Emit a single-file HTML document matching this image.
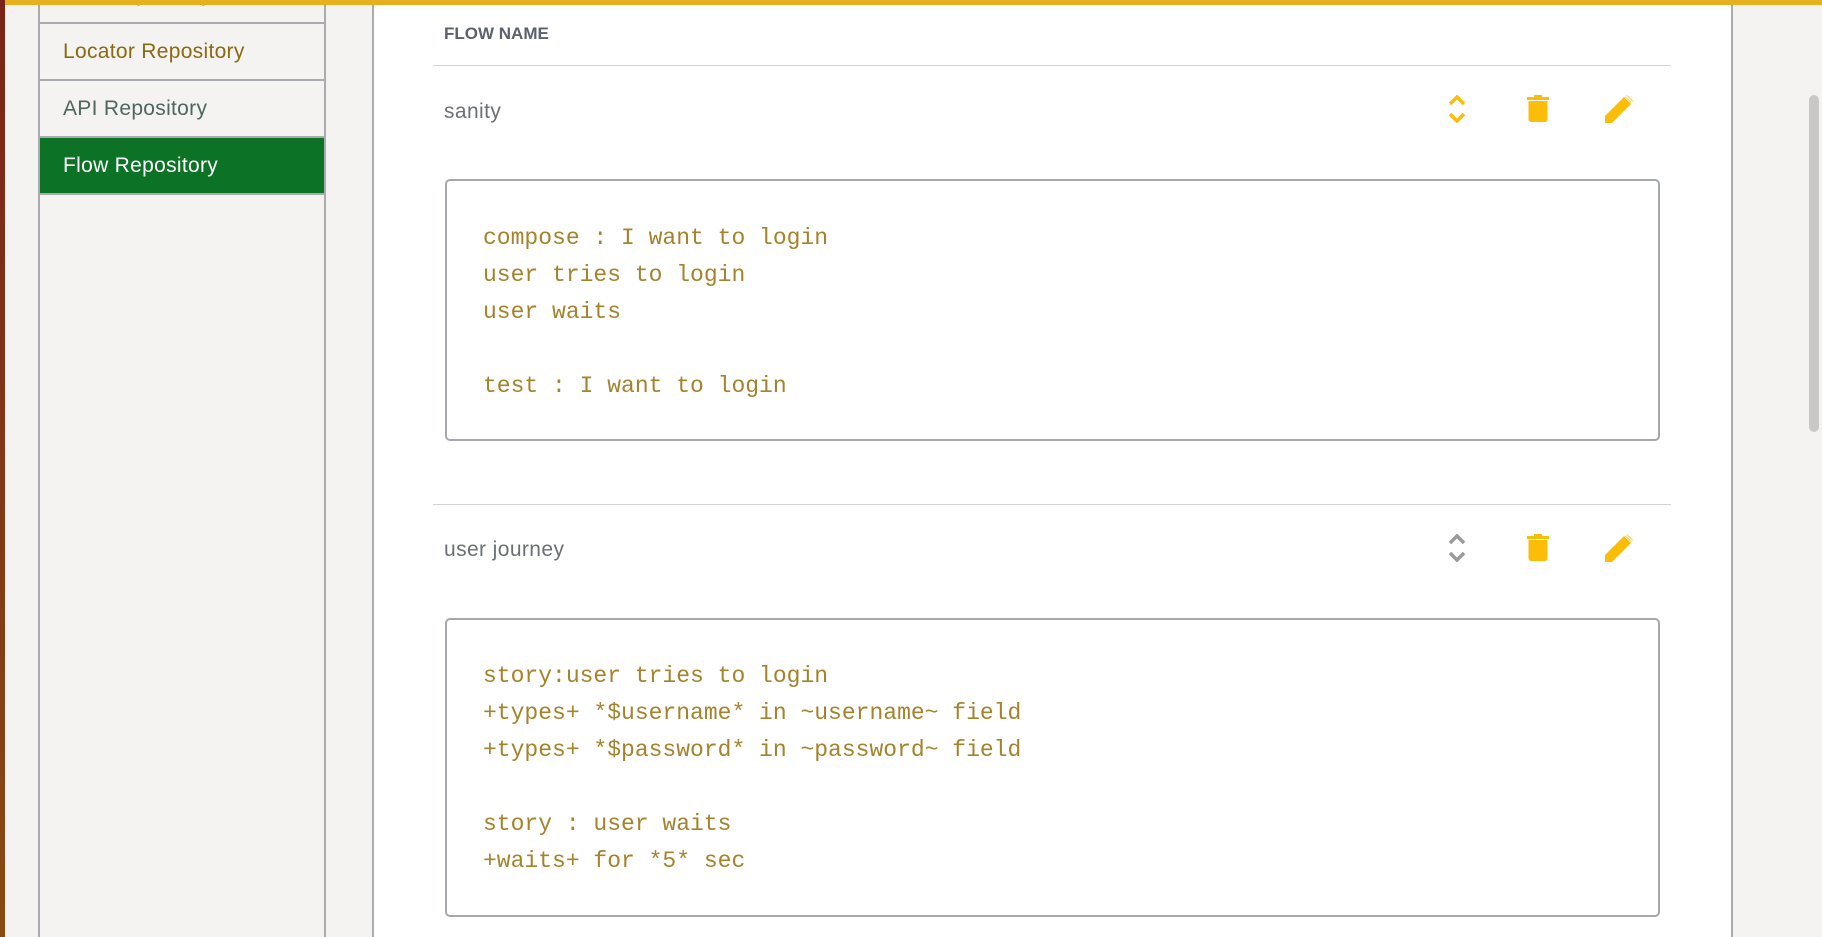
<!DOCTYPE html>
<html><head><meta charset="utf-8"><style>
*{margin:0;padding:0;box-sizing:border-box}
body{width:1822px;height:937px;overflow:hidden;background:#f4f3f1;position:relative;font-family:"Liberation Sans",sans-serif}
.abs{position:absolute}
.lb{left:0;top:0;width:5px;height:937px;background:linear-gradient(#7a2418,#8a4a12)}
.tb{left:5px;top:0;right:0;height:5px;background:#e6b020}
.side{left:38px;top:5px;width:288px;height:932px;border-left:2px solid #a9abae;border-right:2px solid #a9abae;background:#f4f3f1}
.item{position:absolute;left:0;width:284px;height:57px;border-bottom:2px solid #a9abae;font-size:21px;letter-spacing:0.3px;padding-left:23px;line-height:55px}
.main{left:372px;top:5px;width:1361px;height:932px;background:#fff;border-left:2px solid #a9abae;border-right:2px solid #a9abae}
.hr{height:1px;background:#d4d4d8}
.code{border:2px solid #a5a8ac;border-radius:5px;background:#fff;font-family:"Liberation Mono",monospace;font-size:23px;color:#a5832c;padding-left:36px;line-height:37px;white-space:pre}
.name{font-size:21px;color:#6b7078;letter-spacing:0.4px}
</style></head><body>
<div class="abs lb"></div>
<div class="abs side">
  <div class="item" style="top:-38px;color:#7a6a2a">Test Repository</div>
  <div class="item" style="top:19px;color:#8a6a10">Locator Repository</div>
  <div class="item" style="top:76px;color:#4f6560">API Repository</div>
  <div class="item" style="top:133px;background:#0c7326;color:#fff">Flow Repository</div>
</div>
<div class="abs main"></div>
<div class="abs tb"></div>
<div class="abs" style="left:1809px;top:95px;width:10px;height:337px;background:#c8c8c8;border-radius:5px"></div>

<div class="abs" style="left:444px;top:24px;font-size:17px;font-weight:bold;color:#5c6170">FLOW NAME</div>
<div class="abs hr" style="left:433px;top:65px;width:1238px"></div>
<div class="abs name" style="left:444px;top:100px">sanity</div>

<svg class="abs" style="left:1447px;top:95px" width="20" height="28" viewBox="0 0 20 28"><path d="M3 9 L10 2 L17 9 M3 19 L10 26 L17 19" stroke="#fbbd08" stroke-width="3.5" fill="none"/></svg>
<svg class="abs" style="left:1526px;top:95px" width="24" height="28" viewBox="0 0 24 28"><rect x="1" y="2" width="22" height="3" fill="#fbbd08"/><rect x="8" y="0" width="8" height="3" fill="#fbbd08"/><path d="M2.5 6 H21.5 V24 Q21.5 27 18.5 27 H5.5 Q2.5 27 2.5 24Z" fill="#fbbd08"/></svg>
<svg class="abs" style="left:1605px;top:95px" width="30" height="29" viewBox="0 0 30 29"><path d="M0 21 L19 2 L26 9 L7 28 H0Z" fill="#fbbd08"/><path d="M22 0 L28 6 L26 8 L20 2Z" fill="#fbbd08"/><path d="M21 1 L27 7" stroke="#fff" stroke-width="1.5"/></svg>

<div class="abs code" style="left:445px;top:179px;width:1215px;height:262px;padding-top:39px">compose : I want to login
user tries to login
user waits

test : I want to login</div>

<div class="abs hr" style="left:433px;top:504px;width:1238px"></div>
<div class="abs name" style="left:444px;top:538px">user journey</div>

<svg class="abs" style="left:1447px;top:534px" width="20" height="28" viewBox="0 0 20 28"><path d="M3 9 L10 2 L17 9 M3 19 L10 26 L17 19" stroke="#9a9a9a" stroke-width="3.5" fill="none"/></svg>
<svg class="abs" style="left:1526px;top:534px" width="24" height="28" viewBox="0 0 24 28"><rect x="1" y="2" width="22" height="3" fill="#fbbd08"/><rect x="8" y="0" width="8" height="3" fill="#fbbd08"/><path d="M2.5 6 H21.5 V24 Q21.5 27 18.5 27 H5.5 Q2.5 27 2.5 24Z" fill="#fbbd08"/></svg>
<svg class="abs" style="left:1605px;top:534px" width="30" height="29" viewBox="0 0 30 29"><path d="M0 21 L19 2 L26 9 L7 28 H0Z" fill="#fbbd08"/><path d="M22 0 L28 6 L26 8 L20 2Z" fill="#fbbd08"/><path d="M21 1 L27 7" stroke="#fff" stroke-width="1.5"/></svg>

<div class="abs code" style="left:445px;top:618px;width:1215px;height:299px;padding-top:38px">story:user tries to login
+types+ *$username* in ~username~ field
+types+ *$password* in ~password~ field

story : user waits
+waits+ for *5* sec</div>
</body></html>
